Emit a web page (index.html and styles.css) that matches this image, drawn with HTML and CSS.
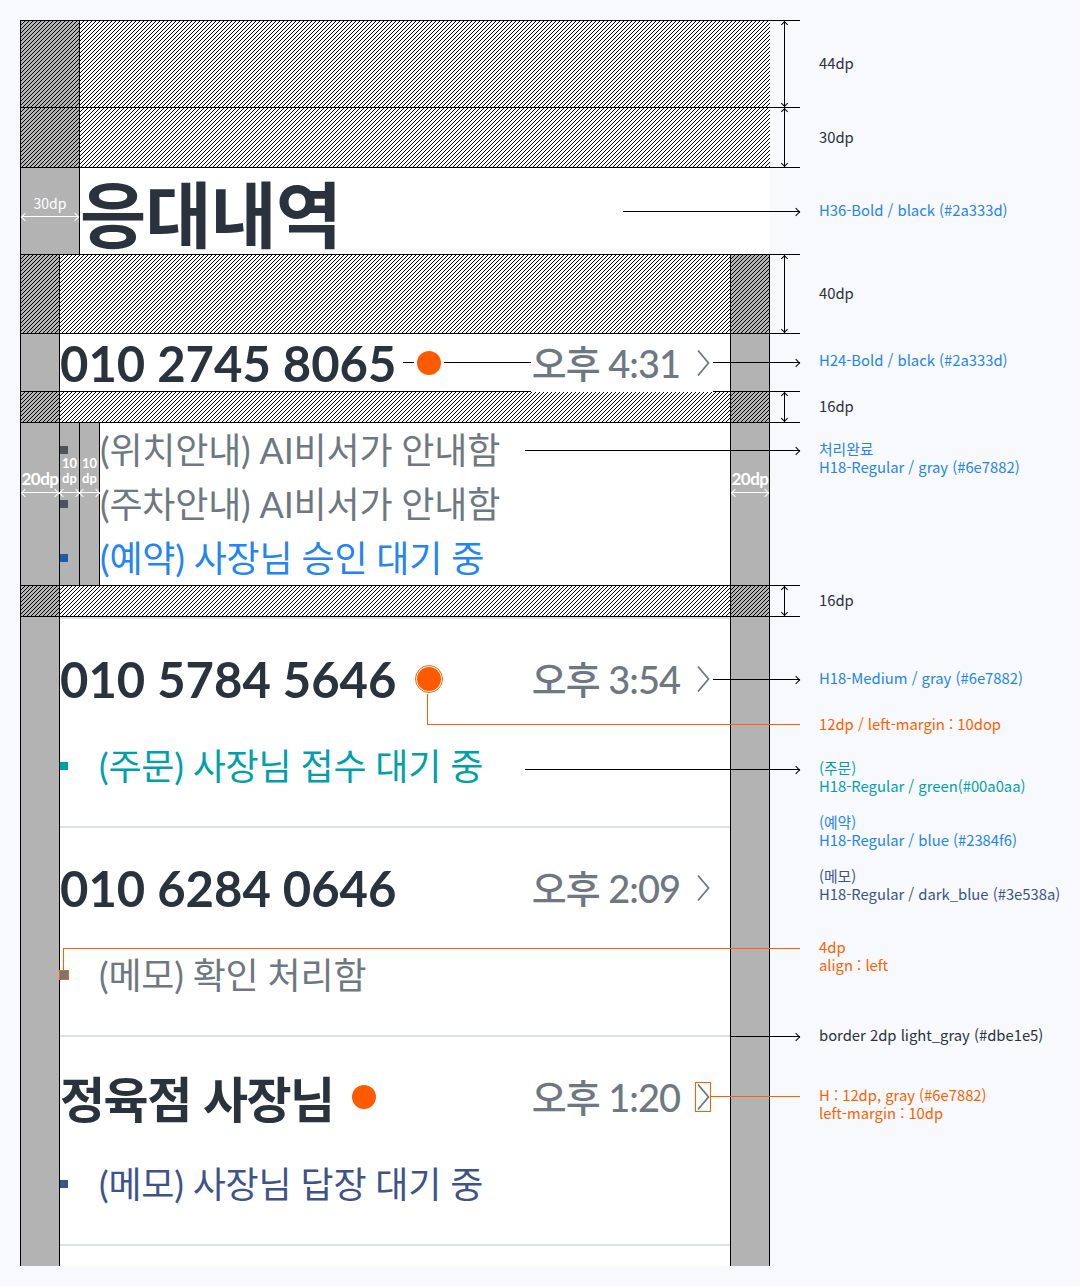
FILE: index.html
```html
<!DOCTYPE html>
<html lang="ko">
<head>
<meta charset="utf-8">
<title>응대내역 - spec</title>
<link rel="stylesheet" href="styles.css">
</head>
<body>
<div class="canvas">
  <div class="frame">

    <!-- status bar 44dp -->
    <div class="row r-a">
      <div class="side-w gray hatch"></div>
      <div class="main hatch"></div>
      <div class="dim"><i class="ah up"></i><i class="ah dn"></i></div>
      <p class="note n-a">44dp</p>
    </div>

    <!-- nav 30dp -->
    <div class="row r-b">
      <div class="side-w gray hatch"></div>
      <div class="main hatch"></div>
      <div class="dim"><i class="ah up"></i><i class="ah dn"></i></div>
      <p class="note n-b">30dp</p>
    </div>

    <!-- title -->
    <div class="row r-c">
      <div class="side-w gray lbl-30">
        <span class="dp-s">30dp</span>
        <span class="warrow"></span>
      </div>
      <div class="main"><h1 class="title">응대내역</h1></div>
      <span class="lead l-c"></span>
      <p class="note blue n-c">H36-Bold / black (#2a333d)</p>
    </div>

    <!-- 40dp -->
    <div class="row r-d">
      <div class="side gray hatch"></div>
      <div class="main hatch"></div>
      <div class="side gray hatch"></div>
      <div class="dim"><i class="ah up"></i><i class="ah dn"></i></div>
      <p class="note n-d">40dp</p>
    </div>

    <!-- first call row -->
    <div class="row r-e">
      <div class="side gray"></div>
      <div class="main head head-top">
        <span class="num">010 2745 8065</span>
        <span class="dot"></span>
        <span class="tgroup"><span class="time">오후 4:31</span><svg class="chev" viewBox="0 0 14 28"><polyline points="2,1.5 12.5,14 2,26.5"/></svg></span>
      </div>
      <div class="side gray"></div>
      <span class="lead l-e"></span>
      <p class="note blue n-e">H24-Bold / black (#2a333d)</p>
    </div>

    <!-- 16dp -->
    <div class="row r-f">
      <div class="side gray hatch"></div>
      <div class="main hatch"></div>
      <div class="side gray hatch"></div>
      <div class="dim"><i class="ah up"></i><i class="ah dn"></i></div>
      <p class="note n-f">16dp</p>
    </div>

    <!-- message lines -->
    <div class="row r-g">
      <div class="side gray lbl-20">
        <span class="dp-b">20dp</span>
        <span class="warrow"></span>
      </div>
      <div class="main lines">
        <div class="line"><span class="g1"><i class="bul b-gray"></i></span><span class="g2"></span><span class="msg c-gray">(위치안내) AI비서가 안내함</span></div>
        <div class="line"><span class="g1"><i class="bul b-gray"></i></span><span class="g2"></span><span class="msg c-gray">(주차안내) AI비서가 안내함</span></div>
        <div class="line"><span class="g1"><i class="bul b-blue"></i></span><span class="g2"></span><span class="msg c-blue">(예약) 사장님 승인 대기 중</span></div>
        <div class="ten t1"><span class="dp-t">10<br>dp</span><span class="warrow"></span></div>
        <div class="ten t2"><span class="dp-t">10<br>dp</span><span class="warrow"></span></div>
      </div>
      <div class="side gray lbl-20">
        <span class="dp-b">20dp</span>
        <span class="warrow"></span>
      </div>
      <span class="lead l-g"></span>
      <div class="note blue n-g"><p>처리완료</p><p>H18-Regular / gray (#6e7882)</p></div>
    </div>

    <!-- 16dp -->
    <div class="row r-h">
      <div class="side gray hatch"></div>
      <div class="main hatch"></div>
      <div class="side gray hatch"></div>
      <div class="dim"><i class="ah up"></i><i class="ah dn"></i></div>
      <p class="note n-h">16dp</p>
    </div>

    <!-- list -->
    <div class="row body">
      <div class="side gray"></div>
      <div class="main list">

        <div class="item i2">
          <div class="head">
            <span class="num">010 5784 5646</span>
            <span class="dot boxed"></span>
            <span class="tgroup"><span class="time">오후 3:54</span><svg class="chev" viewBox="0 0 14 28"><polyline points="2,1.5 12.5,14 2,26.5"/></svg></span>
          </div>
          <div class="mline"><i class="bul b-green"></i><span class="msg c-green">(주문) 사장님 접수 대기 중</span></div>
          <span class="lead l-i2t"></span>
          <p class="note blue n-i2t">H18-Medium / gray (#6e7882)</p>
          <span class="oline o-i2"></span>
          <p class="note orange n-i2o">12dp / left-margin : 10dop</p>
          <span class="lead l-i2m"></span>
          <div class="note n-i2m">
            <p class="c-green">(주문)</p>
            <p class="c-green">H18-Regular / green(#00a0aa)</p>
            <p class="blue gap">(예약)</p>
            <p class="blue">H18-Regular / blue (#2384f6)</p>
            <p class="c-dblue gap">(메모)</p>
            <p class="c-dblue">H18-Regular / dark_blue (#3e538a)</p>
          </div>
        </div>

        <div class="item i3">
          <div class="head">
            <span class="num">010 6284 0646</span>
            <span class="tgroup"><span class="time">오후 2:09</span><svg class="chev" viewBox="0 0 14 28"><polyline points="2,1.5 12.5,14 2,26.5"/></svg></span>
          </div>
          <div class="mline"><i class="bul b-memo boxed-b"></i><span class="msg c-gray">(메모) 확인 처리함</span></div>
          <span class="oline o-i3"></span>
          <div class="note orange n-i3o"><p>4dp</p><p>align : left</p></div>
          <span class="lead l-i3b"></span>
          <p class="note n-i3b">border 2dp light_gray (#dbe1e5)</p>
        </div>

        <div class="item i4">
          <div class="head">
            <span class="num name">정육점 사장님</span>
            <span class="dot d-name"></span>
            <span class="tgroup"><span class="time">오후 1:20</span><svg class="chev boxed-c" viewBox="0 0 14 28"><polyline points="2,1.5 12.5,14 2,26.5"/></svg></span>
          </div>
          <div class="mline"><i class="bul b-dblue"></i><span class="msg c-dblue">(메모) 사장님 답장 대기 중</span></div>
          <span class="hline o-i4"></span>
          <div class="note orange n-i4o"><p>H : 12dp, gray (#6e7882)</p><p>left-margin : 10dp</p></div>
        </div>

        <div class="tail"></div>
      </div>
      <div class="side gray"></div>
    </div>

  </div>
</div>
</body>
</html>
```

FILE: styles.css
```css
* { box-sizing: border-box; margin: 0; padding: 0; }
html, body { background: #f7f9fc; }
body {
  width: 1080px;
  height: 1286px;
  overflow: hidden;
  font-family: Lato, "Noto Sans CJK KR", sans-serif;
  color: #2a333d;
}

.canvas { padding: 20px; }
.frame { width: 750px; border-top: 1px solid #000; }

/* ---------- rows ---------- */
.row { position: relative; display: flex; border-bottom: 1px solid #000; }
.row.body { border-bottom: 0; }

.r-a { height: 87px; }
.r-b { height: 60px; }
.r-c { height: 87px; }
.r-d { height: 79px; }
.r-e { height: 58px; }
.r-f { height: 31px; }
.r-g { height: 163px; }
.r-h { height: 31px; }

.side-w { flex: none; width: 60px; border-left: 1px solid #000; border-right: 1px solid #000; }
.side { flex: none; width: 40px; border-left: 1px solid #000; border-right: 1px solid #000; }
.main { flex: 1; min-width: 0; background: #fff; position: relative; }

.gray { background-color: #b3b3b3; }
.hatch {
  background-image: linear-gradient(to bottom right,
    transparent calc(50% - 0.55px), #000 calc(50% - 0.55px),
    #000 calc(50% + 0.55px), transparent calc(50% + 0.55px));
  background-size: 4px 4px;
}
.main.hatch { background-color: #fff; }

/* ---------- dimension markers ---------- */
.dim {
  position: absolute;
  left: 100%;
  top: -1px;
  bottom: -1px;
  width: 30px;
  border-top: 1px solid #000;
  border-bottom: 1px solid #000;
}
.dim::before {
  content: "";
  position: absolute;
  left: 14px;
  top: 0;
  bottom: 0;
  width: 1px;
  background: #000;
}
.ah {
  position: absolute;
  left: 12px;
  width: 5px;
  height: 5px;
  border-left: 1px solid #000;
  border-top: 1px solid #000;
}
.ah.up { top: 1px; transform: rotate(45deg); }
.ah.dn { bottom: 1px; transform: rotate(225deg); }

/* ---------- notes ---------- */
.note {
  position: absolute;
  left: 799px;
  font-family: "Noto Sans CJK KR", sans-serif;
  font-size: 14.8px;
  line-height: 18px;
  white-space: nowrap;
  color: #2a333d;
  z-index: 2;
}
.note .gap { margin-top: 18px; }
.blue { color: #2384f6; }
.orange { color: #ff5f00; }

.n-a { top: 33px; }
.n-b { top: 20px; }
.n-c { top: 33px; }
.n-d { top: 29px; }
.n-e { top: 17px; }
.n-f { top: 5px; }
.n-g { top: 17px; }
.n-h { top: 5px; }

/* leader lines */
.lead {
  position: absolute;
  height: 1px;
  background: #000;
  z-index: 2;
}
.lead::after {
  content: "";
  position: absolute;
  right: 1px;
  top: -2px;
  width: 5px;
  height: 5px;
  border-right: 1px solid #000;
  border-top: 1px solid #000;
  transform: rotate(45deg);
}
.l-c { left: 603px; top: 43px; width: 177px; }
.l-e { left: 383px; top: 28px; width: 397px; z-index: 0; }
.l-g { left: 505px; top: 27px; width: 275px; }

/* white dp labels */
.lbl-30 { display: flex; flex-direction: column; padding-top: 26px; }
.dp-s {
  font-family: "Noto Sans CJK KR", sans-serif;
  font-size: 14px;
  line-height: 18px;
  color: #fff;
  text-align: center;
}
.warrow {
  display: block;
  position: relative;
  height: 1px;
  margin: 4px 1px 0;
  background: #fff;
}
.warrow::before,
.warrow::after {
  content: "";
  position: absolute;
  top: -2px;
  width: 5px;
  height: 5px;
  transform: rotate(45deg);
}
.warrow::before { left: 0; border-left: 1px solid #fff; border-bottom: 1px solid #fff; }
.warrow::after { right: 0; border-right: 1px solid #fff; border-top: 1px solid #fff; }

.lbl-20 { display: flex; flex-direction: column; padding-top: 46px; }
.dp-b {
  font-family: Lato, sans-serif;
  font-weight: 700;
  font-size: 17px;
  line-height: 19px;
  color: #fff;
  text-align: center;
  letter-spacing: -0.5px;
}

/* ---------- title ---------- */
.title {
  font-family: "Noto Sans CJK KR", sans-serif;
  font-weight: 700;
  font-size: 72px;
  line-height: 86px;
  color: #2a333d;
  letter-spacing: -1px;
  white-space: nowrap;
}

/* ---------- call heads ---------- */
.head {
  display: flex;
  align-items: center;
  height: 58px;
  padding-right: 17px;
}
.head-top { height: auto; }
.num {
  position: relative;
  z-index: 1;
  font-weight: 700;
  font-size: 49px;
  line-height: 58px;
  color: #2a333d;
  white-space: nowrap;
}
.num.name { font-family: "Noto Sans CJK KR", sans-serif; font-size: 49px; letter-spacing: -1.5px; }
.dot {
  position: relative;
  z-index: 1;
  flex: none;
  width: 24px;
  height: 24px;
  margin-left: 21px;
  border-radius: 50%;
  background: #ff5a00;
  box-shadow: 0 0 0 3px #fff;
}
.dot.d-name { margin-left: 18px; }
.dot.boxed { outline: 1px solid #ff5f00; outline-offset: 1px; box-shadow: none; }
.tgroup {
  position: relative;
  z-index: 1;
  display: flex;
  align-items: center;
  margin-left: auto;
  padding: 0 3px 0 1px;
  background: #fff;
}
.time {
  font-weight: 500;
  font-size: 38px;
  line-height: 58px;
  color: #6e7882;
  white-space: nowrap;
  letter-spacing: -1px;
}
.chev {
  display: block;
  flex: none;
  width: 14px;
  height: 28px;
  margin-left: 16px;
  fill: none;
  stroke: #6e7882;
  stroke-width: 1.8;
}
.chev.boxed-c { outline: 1px solid #ff5f00; outline-offset: 0; }

/* ---------- message lines (top block) ---------- */
.lines { display: flex; flex-direction: column; }
.line { display: flex; align-items: center; height: 54px; }
.g1, .g2 {
  flex: none;
  align-self: stretch;
  display: flex;
  align-items: center;
  width: 20px;
  background: #b3b3b3;
  border-right: 1px solid #000;
}
.msg {
  font-size: 36px;
  line-height: 54px;
  white-space: nowrap;
  letter-spacing: -0.2px;
}
.bul { display: block; flex: none; width: 8px; height: 8px; }
.b-gray { background: #4d545b; }
.b-blue { background: #195cac; }
.b-green { background: #00a0aa; }
.b-memo { background: #6e7882; }
.b-dblue { background: #3e538a; }
.boxed-b { outline: 1px solid #ff5f00; }

.c-gray { color: #6e7882; }
.c-blue { color: #2384f6; }
.c-green { color: #00a0aa; }
.c-dblue { color: #3e538a; }

.ten {
  position: absolute;
  top: 33px;
  width: 19px;
  display: flex;
  flex-direction: column;
}
.ten.t1 { left: 0; }
.ten.t2 { left: 20px; }
.dp-t {
  font-family: Lato, sans-serif;
  font-weight: 700;
  font-size: 13px;
  line-height: 15px;
  color: #fff;
  text-align: center;
}
.ten .warrow { margin: 6px 0 0; }

/* ---------- list ---------- */
.list { display: flex; flex-direction: column; }
.item {
  position: relative;
  padding: 31px 0 33px;
  border-bottom: 2px solid #dbe1e5;
}
.item.i2 { border-top: 2px solid #dbe1e5; }
.mline { display: flex; align-items: center; height: 54px; margin-top: 31px; }
.mline .msg { margin-left: 31px; }
.tail { height: 20px; }

/* item annotations */
.item .note { left: 759px; }
.l-i2t { left: 653px; top: 60px; width: 87px; }
.n-i2t { top: 50px; }
.oline {
  position: absolute;
  border: 0 solid #ff5f00;
  z-index: 2;
}
.o-i2 { left: 367px; top: 75px; width: 373px; height: 31px; border-left-width: 1px; border-bottom-width: 1px; }
.n-i2o { top: 96px; }
.l-i2m { left: 465px; top: 150px; width: 275px; }
.n-i2m { top: 140px; }

.o-i3 { left: 3px; top: 120px; width: 737px; height: 23px; border-left-width: 1px; border-top-width: 1px; }
.n-i3o { top: 110px; }
.l-i3b { left: 670px; top: 208px; width: 70px; }
.n-i3b { top: 198px; }

.hline { position: absolute; height: 1px; background: #ff5f00; z-index: 2; }
.o-i4 { left: 651px; top: 59px; width: 89px; }
.n-i4o { top: 49px; }
```
